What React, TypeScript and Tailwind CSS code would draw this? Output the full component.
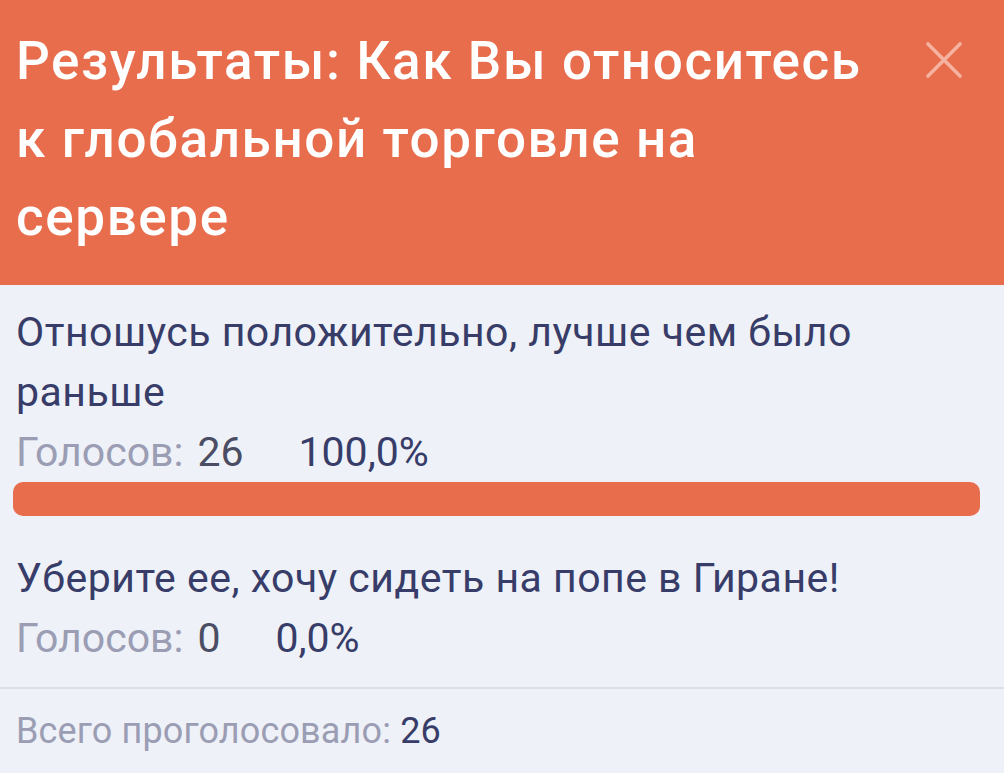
type Option = {
  text: string;
  votes: number;
  percent: string;
  share: number;
};

const options: Option[] = [
  { text: "Отношусь положительно, лучше чем было раньше", votes: 26, percent: "100,0%", share: 1 },
  { text: "Уберите ее, хочу сидеть на попе в Гиране!", votes: 0, percent: "0,0%", share: 0 },
];

function CloseIcon() {
  return (
    <svg width="36" height="36" viewBox="0 0 36 36" fill="none">
      <path d="M2 2L34 34M34 2L2 34" stroke="#f4b3a2" strokeWidth="3.6" strokeLinecap="round" />
    </svg>
  );
}

function OptionRow({ option }: { option: Option }) {
  return (
    <div className="pb-[19px]">
      <p className="pl-4 pr-6 text-[41px] leading-[60px] tracking-[0.5px] text-[#373c68]">
        {option.text}
      </p>
      <div className="flex items-baseline pl-4 text-[41px] leading-[60px]">
        <span className="text-[#9a9db3]">Голосов:</span>
        <span className="ml-[14px] text-[#4a4d63]">{option.votes}</span>
        <span className="ml-[55px] text-[#373c68]">{option.percent}</span>
      </div>
      {option.share > 0 && (
        <div className="mb-[13px] ml-[13px] mr-6 h-[34px]">
          <div
            className="h-full rounded-[10px] bg-[#e76d4d]"
            style={{ width: `${option.share * 100}%` }}
          />
        </div>
      )}
    </div>
  );
}

export default function App() {
  return (
    <div
      className="min-h-[773px] w-[1004px] bg-[#eef1f7]"
      style={{ fontFamily: "Roboto, 'Noto Sans', sans-serif" }}
    >
      <div className="flex items-start bg-[#e76d4d] pb-[29px] pl-4 pt-[22px]">
        <h1 className="flex-1 pr-6 text-[53px] font-medium leading-[78px] tracking-[1.6px] text-white">
          Результаты: Как Вы относитесь к глобальной торговле на сервере
        </h1>
        <button className="mr-[42px] mt-[20px] flex h-[36px] w-[36px] items-center justify-center">
          <CloseIcon />
        </button>
      </div>

      <div className="pt-[17px]">
        {options.map((o) => (
          <OptionRow key={o.text} option={o} />
        ))}
      </div>

      <div className="border-t-2 border-[#dadfea] pl-4 pt-[18px] text-[36px] leading-[48px] tracking-[0.15px]">
        <span className="text-[#9a9db3]">Всего проголосовало:</span>{" "}
        <span className="text-[#373c68]">26</span>
      </div>
    </div>
  );
}
